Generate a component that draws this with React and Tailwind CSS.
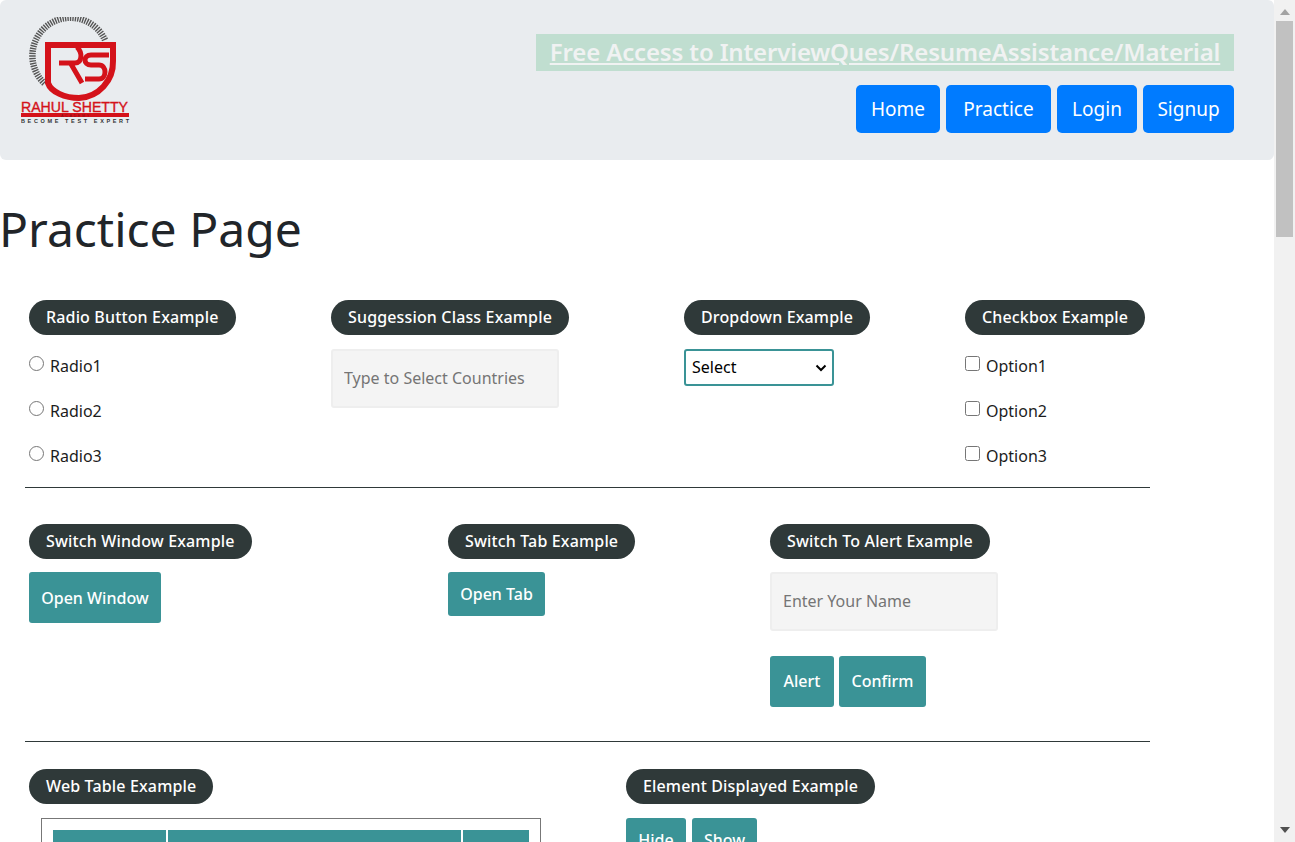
const font = { fontFamily: '"Noto Sans", sans-serif' };

function Logo() {
  return (
    <svg viewBox="0 0 110 110" className="w-[110px] h-[110px] shrink-0">
      {/* gear ring */}
      <path d="M84 23 A38 38 0 1 0 24 67" fill="none" stroke="#555" strokeWidth="6.5" strokeDasharray="1.4 1.1" />
      <path d="M27 28 H92 V44 A 36 36 0 0 1 58 81 C 44 81 30 75 27 66 Z" fill="#e9ecef" stroke="#d4121a" strokeWidth="6" />
      {/* R */}
      <path d="M38 46 H54 C 61 46 62 36 56 30 M50 47 L61 66" fill="none" stroke="#d4121a" strokeWidth="5" />
      {/* S */}
      <path d="M88 38 H70 C 62 38 62 48 70 48 H78 C 86 48 86 62 78 62 H64" fill="none" stroke="#d4121a" strokeWidth="5" />
      <text x="0" y="95" textLength="107" lengthAdjust="spacingAndGlyphs" fontFamily="Liberation Sans" fontSize="14" fill="#d4121a" stroke="#d4121a" strokeWidth="0.35">RAHUL SHETTY</text>
      <rect x="0" y="96" width="108" height="4" fill="#d4121a" />
      <text x="40" y="99.5" textLength="28" fontFamily="Liberation Sans" fontSize="3.5" fill="#7a1015">ACADEMY</text>
      <text x="0" y="106" textLength="108" fontFamily="Liberation Sans" fontWeight="700" fontSize="5.5" fill="#333">BECOME TEST EXPERT</text>
    </svg>
  );
}

function Pill({ children }) {
  return (
    <div className="inline-flex h-[35px] items-center rounded-full bg-[#2f3939] px-[17px] pb-[2px] text-[16px] font-medium tracking-[0.15px] text-white whitespace-nowrap">
      {children}
    </div>
  );
}

function Option({ type, name, label }) {
  return (
    <label className="flex h-[45px] items-center gap-[6px] text-[16px] text-[#1c1c1c]">
      <input type={type} name={name} className="w-[15px] h-[15px] m-0 -mt-1" />
      {label}
    </label>
  );
}

function TealButton({ className, children }) {
  return (
    <button className={`rounded-[3px] bg-[#3a9396] text-[16px] font-medium text-white ${className}`}>
      {children}
    </button>
  );
}

function TextBox({ placeholder }) {
  return (
    <input
      placeholder={placeholder}
      className="h-[59px] w-[228px] rounded-[3px] border-2 border-[#eeeeee] bg-[#f4f4f4] px-[11px] pb-[2px] text-[16px] placeholder:text-[#757575]"
    />
  );
}

function Scrollbar() {
  return (
    <div className="flex w-[21px] shrink-0 flex-col items-center bg-[#f1f1f1]">
      <svg width="10" height="6" viewBox="0 0 10 6" className="mt-[9px] mb-[6px]"><path d="M5 0 L10 6 H0 Z" fill="#a3a3a3" /></svg>
      <div className="h-[216px] w-[17px] bg-[#c1c1c1]" />
      <svg width="10" height="6" viewBox="0 0 10 6" className="mt-auto mb-[9px]"><path d="M0 0 H10 L5 6 Z" fill="#505050" /></svg>
    </div>
  );
}

export default function App() {
  return (
    <div className="flex h-screen overflow-hidden bg-white" style={font}>
      <div className="min-w-0 flex-1 overflow-hidden">
        <header className="flex h-[160px] justify-between rounded-[6px] bg-[#e9ecef] pl-[21px] pr-[40px] pt-[17px]">
          <Logo />
          <div className="flex flex-col items-end pt-[17px]">
            <div className="flex h-[37px] w-[698px] items-center justify-center bg-[#c0ded0] pb-[2px]">
              <a href="#" className="text-[24px] font-semibold tracking-[-0.15px] text-[#f0f2f2] underline">Free Access to InterviewQues/ResumeAssistance/Material</a>
            </div>
            <nav className="mt-[14px] flex gap-[6px] text-[19px] text-white">
              <a href="#" className="flex h-[48px] w-[84px] items-center justify-center rounded-[5px] bg-[#007bff]">Home</a>
              <a href="#" className="flex h-[48px] w-[105px] items-center justify-center rounded-[5px] bg-[#007bff]">Practice</a>
              <a href="#" className="flex h-[48px] w-[80px] items-center justify-center rounded-[5px] bg-[#007bff]">Login</a>
              <a href="#" className="flex h-[48px] w-[91px] items-center justify-center rounded-[5px] bg-[#007bff]">Signup</a>
            </nav>
          </div>
        </header>

        <h1 className="-ml-[1px] mt-[40px] h-[58px] text-[48px] leading-[58px] text-[#212529]">Practice Page</h1>

        <section className="ml-[25px] mt-[42px] grid h-[188px] w-[1125px] grid-cols-[302px_353px_281px_1fr] border-b border-[#2f3939] pl-[4px]">
          <div>
            <Pill>Radio Button Example</Pill>
            <div className="mt-[8px]">
              <Option type="radio" name="r" label="Radio1" />
              <Option type="radio" name="r" label="Radio2" />
              <Option type="radio" name="r" label="Radio3" />
            </div>
          </div>
          <div>
            <Pill>Suggession Class Example</Pill>
            <div className="mt-[14px]"><TextBox placeholder="Type to Select Countries" /></div>
          </div>
          <div>
            <Pill>Dropdown Example</Pill>
            <div className="relative mt-[14px] w-[150px]">
              <select className="block h-[37px] w-[150px] appearance-none rounded-[3px] border-2 border-[#3a9396] bg-white pb-[2px] pl-[6px] text-[16px] text-black">
                <option>Select</option>
              </select>
              <svg width="12" height="8" viewBox="0 0 12 8" className="pointer-events-none absolute right-[7px] top-[15px]">
                <path d="M1.5 1.5 L6 6 L10.5 1.5" fill="none" stroke="#000" strokeWidth="2" />
              </svg>
            </div>
          </div>
          <div>
            <Pill>Checkbox Example</Pill>
            <div className="mt-[8px]">
              <Option type="checkbox" name="c1" label="Option1" />
              <Option type="checkbox" name="c2" label="Option2" />
              <Option type="checkbox" name="c3" label="Option3" />
            </div>
          </div>
        </section>

        <section className="ml-[25px] grid h-[254px] w-[1125px] grid-cols-[419px_322px_1fr] border-b border-[#2f3939] pl-[4px] pt-[36px]">
          <div>
            <Pill>Switch Window Example</Pill>
            <TealButton className="mt-[13px] block h-[51px] w-[132px]">Open Window</TealButton>
          </div>
          <div>
            <Pill>Switch Tab Example</Pill>
            <TealButton className="mt-[13px] block h-[44px] w-[97px]">Open Tab</TealButton>
          </div>
          <div>
            <Pill>Switch To Alert Example</Pill>
            <div className="mt-[13px]"><TextBox placeholder="Enter Your Name" /></div>
            <div className="mt-[25px] flex gap-[5px]">
              <TealButton className="h-[51px] w-[64px] pb-[2px]">Alert</TealButton>
              <TealButton className="h-[51px] w-[87px] pb-[2px]">Confirm</TealButton>
            </div>
          </div>
        </section>

        <section className="ml-[25px] grid w-[1125px] grid-cols-[597px_1fr] pl-[4px] pt-[27px]">
          <div>
            <Pill>Web Table Example</Pill>
            <div className="ml-[12px] mt-[14px] w-[500px] border border-[#777777] p-[11px]">
              <table className="w-[476px] border-separate border-spacing-0 text-[16px] text-white">
                <thead>
                  <tr className="bg-[#3a9396]">
                    <th className="w-[115px] border-r-2 border-white py-5 font-medium">Instructor</th>
                    <th className="w-[295px] border-r-2 border-white py-5 font-medium">Course</th>
                    <th className="py-5 font-medium">Price</th>
                  </tr>
                </thead>
              </table>
            </div>
          </div>
          <div>
            <Pill>Element Displayed Example</Pill>
            <div className="mt-[14px] flex gap-[6px]">
              <TealButton className="h-[44px] w-[60px]">Hide</TealButton>
              <TealButton className="h-[44px] w-[65px]">Show</TealButton>
            </div>
          </div>
        </section>
      </div>
      <Scrollbar />
    </div>
  );
}
